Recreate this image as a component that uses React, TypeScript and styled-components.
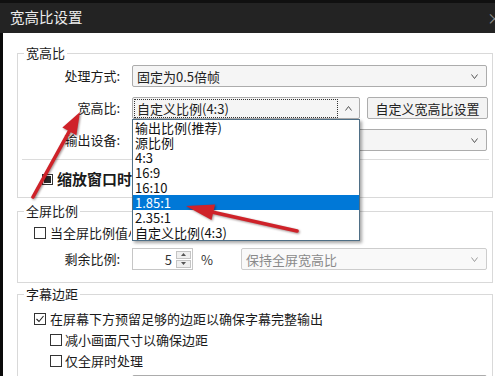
import React from 'react';
import styled, { createGlobalStyle } from 'styled-components';

const FONT = `"Noto Sans CJK SC", "Noto Sans", "Liberation Sans", sans-serif`;

const GlobalStyle = createGlobalStyle`
  html, body { margin: 0; padding: 0; background: #fff; }
  body { font-family: ${FONT}; }
  #root { width: 495px; height: 376px; overflow: hidden; }
`;

const Window = styled.div`
  position: relative;
  width: 495px;
  height: 376px;
  overflow: hidden;
  display: flex;
  flex-direction: column;
  background: #fff;
  font-family: ${FONT};
  font-size: 13px;
  color: #1a1a1a;
`;

const TitleBar = styled.div`
  flex: 0 0 33px;
  box-sizing: border-box;
  border-top: 3px solid #101010;
  background: #232323;
  display: flex;
  align-items: center;
  justify-content: space-between;
  padding: 0 0 2px 10px;
  color: #ececec;
  font-size: 14.5px;
  line-height: 1;
  overflow: hidden;
`;

const Close = styled.span`
  color: #8c8c8c;
  font-size: 15px;
  margin-right: -7px;
`;

const Body = styled.div`
  flex: 1 1 auto;
  border-left: 3px solid #0a0a0a;
  display: flex;
  flex-direction: column;
  padding-top: 12px;
`;

const Group = styled.fieldset<{ $mt?: number }>`
  margin: ${(p) => p.$mt ?? 0}px 2px 0 14px;
  padding: 0;
  border: 1px solid #d9d9d9;
  min-inline-size: 0;
`;

const Legend = styled.legend`
  margin-left: 6px;
  padding: 0 2px;
  font-size: 13px;
  line-height: 16px;
  color: #1a1a1a;
`;

const GroupBody = styled.div<{ $pt: number; $pb: number }>`
  display: flex;
  flex-direction: column;
  padding: ${(p) => p.$pt}px 0 ${(p) => p.$pb}px 0;
`;

const FormRow = styled.div<{ $mt?: number }>`
  display: flex;
  align-items: center;
  height: 22px;
  margin-top: ${(p) => p.$mt ?? 0}px;
`;

const Label = styled.span`
  flex: 0 0 102px;
  margin-right: 12px;
  text-align: right;
  white-space: nowrap;
  line-height: 16px;
`;

const Combo = styled.div<{ $disabled?: boolean }>`
  position: relative;
  box-sizing: border-box;
  flex: 1 1 auto;
  height: 22px;
  margin-right: 5px;
  border: 1px solid ${(p) => (p.$disabled ? '#cdcdcd' : '#acacac')};
  border-radius: 2px;
  background: ${(p) => (p.$disabled ? '#f9f9f9' : '#f5f5f5')};
  color: ${(p) => (p.$disabled ? '#8a8a8a' : '#222')};
  display: flex;
  align-items: center;
  justify-content: space-between;
  padding: 0 8px 0 4px;
  white-space: nowrap;
`;

const OpenCombo = styled.div`
  position: relative;
  box-sizing: border-box;
  flex: 0 0 228px;
  height: 22px;
  border: 1px solid #acacac;
  border-radius: 2px;
  background: #f5f5f5;
  display: flex;
  align-items: center;
  padding-left: 1px;
`;

const FocusRect = styled.div`
  box-sizing: border-box;
  flex: 0 0 204px;
  height: 19px;
  border: 1px dotted #333;
  display: flex;
  align-items: center;
  padding-left: 2px;
  color: #222;
  white-space: nowrap;
`;

const ArrowSlot = styled.div`
  flex: 1 1 auto;
  display: flex;
  align-items: center;
  justify-content: center;
`;

const DropList = styled.div`
  position: absolute;
  left: -1px;
  top: calc(100% + 1px);
  width: 228px;
  box-sizing: border-box;
  border: 1px solid #4f6f86;
  background: #fff;
  box-shadow: 2px 2px 3px rgba(0, 0, 0, 0.35);
  z-index: 10;
  display: flex;
  flex-direction: column;
`;

const DropItem = styled.div<{ $selected?: boolean }>`
  height: 15px;
  line-height: 15px;
  padding-left: 2px;
  font-size: 13px;
  white-space: nowrap;
  background: ${(p) => (p.$selected ? '#0078d7' : 'transparent')};
  color: ${(p) => (p.$selected ? '#fff' : '#111')};
`;

const Button = styled.div`
  box-sizing: border-box;
  flex: 0 0 121px;
  height: 22px;
  margin-left: 7px;
  border: 1px solid #adadad;
  border-radius: 2px;
  background: #f3f3f3;
  display: flex;
  align-items: center;
  justify-content: center;
  color: #222;
  white-space: nowrap;
`;

const Separator = styled.div`
  height: 1px;
  background: #dcdcdc;
  margin: 8px 3px 0 4px;
`;

const CheckRow = styled.div<{ $indent: number; $mt?: number; $h?: number }>`
  display: flex;
  align-items: center;
  height: ${(p) => p.$h ?? 20}px;
  margin-top: ${(p) => p.$mt ?? 0}px;
  padding-left: ${(p) => p.$indent}px;
  white-space: nowrap;
`;

const Box = styled.span<{ $size: number; $filled?: boolean }>`
  position: relative;
  box-sizing: border-box;
  flex: 0 0 ${(p) => p.$size}px;
  width: ${(p) => p.$size}px;
  height: ${(p) => p.$size}px;
  border: 1px solid #333;
  background: #fff;
  display: flex;
  align-items: center;
  justify-content: center;
  &::after {
    content: '';
    display: ${(p) => (p.$filled ? 'block' : 'none')};
    width: ${(p) => p.$size - 4}px;
    height: ${(p) => p.$size - 4}px;
    background: #2a2a2a;
  }
`;

const CheckText = styled.span<{ $gap: number; $bold?: boolean; $clip?: number }>`
  margin-left: ${(p) => p.$gap}px;
  font-size: ${(p) => (p.$bold ? 15 : 13)}px;
  font-weight: ${(p) => (p.$bold ? 700 : 400)};
  line-height: 18px;
  overflow: hidden;
  max-width: ${(p) => (p.$clip ? `${p.$clip}px` : 'none')};
`;

const Spin = styled.div`
  box-sizing: border-box;
  flex: 0 0 61px;
  height: 22px;
  border: 1px solid #c6c6c6;
  background: #fff;
  display: flex;
  align-items: center;
  justify-content: flex-end;
  padding-right: 1px;
`;

const SpinValue = styled.span`
  margin-right: 4px;
  color: #333;
`;

const SpinButtons = styled.div`
  display: flex;
  flex-direction: column;
  gap: 1px;
`;

const SpinBtn = styled.div`
  box-sizing: border-box;
  width: 15px;
  height: 8px;
  border: 1px solid #c4c4c4;
  background: #efefef;
  display: flex;
  align-items: center;
  justify-content: center;
`;

const Percent = styled.span`
  flex: 0 0 48px;
  padding-left: 8px;
  box-sizing: border-box;
  color: #333;
`;

const Overlay = styled.svg`
  position: absolute;
  left: 0;
  top: 0;
  z-index: 20;
  pointer-events: none;
  filter: drop-shadow(1px 1px 1px rgba(40, 0, 0, 0.45));
`;

const Chevron = ({ up = false, color = '#555' }: { up?: boolean; color?: string }) => (
  <svg width="7" height="5" viewBox="0 0 7 5">
    <polyline
      points={up ? '0.5,4.5 3.5,0.5 6.5,4.5' : '0.5,0.5 3.5,4.5 6.5,0.5'}
      fill="none"
      stroke={color}
      strokeWidth="1"
    />
  </svg>
);

const Tri = ({ up }: { up?: boolean }) => (
  <svg width="5" height="3" viewBox="0 0 5 3">
    <polygon points={up ? '0,3 2.5,0 5,3' : '0,0 2.5,3 5,0'} fill="#555" />
  </svg>
);

const Tick = () => (
  <svg width="10" height="10" viewBox="0 0 10 10">
    <polyline points="1.5,5 4,7.5 8.5,2" fill="none" stroke="#222" strokeWidth="1.1" />
  </svg>
);

const items = ['输出比例(推荐)', '源比例', '4:3', '16:9', '16:10', '1.85:1', '2.35:1', '自定义比例(4:3)'];

const RED = '#cf2229';

export default function App() {
  return (
    <>
      <GlobalStyle />
      <Window>
        <TitleBar>
          <span>宽高比设置</span>
          <Close>×</Close>
        </TitleBar>
        <Body>
          <Group>
            <Legend>宽高比</Legend>
            <GroupBody $pt={4} $pb={8}>
              <FormRow>
                <Label>处理方式:</Label>
                <Combo>
                  <span>固定为0.5倍帧</span>
                  <Chevron />
                </Combo>
              </FormRow>
              <FormRow $mt={10}>
                <Label>宽高比:</Label>
                <OpenCombo>
                  <FocusRect>自定义比例(4:3)</FocusRect>
                  <ArrowSlot>
                    <Chevron up />
                  </ArrowSlot>
                  <DropList>
                    {items.map((it, i) => (
                      <DropItem key={it} $selected={i === 5}>
                        {it}
                      </DropItem>
                    ))}
                  </DropList>
                </OpenCombo>
                <Button>自定义宽高比设置</Button>
              </FormRow>
              <FormRow $mt={10}>
                <Label>输出设备:</Label>
                <Combo>
                  <span></span>
                  <Chevron />
                </Combo>
              </FormRow>
              <Separator />
              <CheckRow $indent={24} $mt={9}>
                <Box $size={11} $filled />
                <CheckText $gap={4} $bold $clip={75}>
                  缩放窗口时保持宽高比
                </CheckText>
              </CheckRow>
            </GroupBody>
          </Group>

          <Group $mt={5}>
            <Legend>全屏比例</Legend>
            <GroupBody $pt={4} $pb={12}>
              <CheckRow $indent={16}>
                <Box $size={12} />
                <CheckText $gap={4} $clip={81}>
                  当全屏比例值小于以下数值时保持
                </CheckText>
              </CheckRow>
              <FormRow $mt={5}>
                <Label>剩余比例:</Label>
                <Spin>
                  <SpinValue>5</SpinValue>
                  <SpinButtons>
                    <SpinBtn>
                      <Tri up />
                    </SpinBtn>
                    <SpinBtn>
                      <Tri />
                    </SpinBtn>
                  </SpinButtons>
                </Spin>
                <Percent>%</Percent>
                <Combo $disabled>
                  <span>保持全屏宽高比</span>
                  <Chevron color="#9a9a9a" />
                </Combo>
              </FormRow>
            </GroupBody>
          </Group>

          <Group $mt={3}>
            <Legend>字幕边距</Legend>
            <GroupBody $pt={6} $pb={8}>
              <CheckRow $indent={16} $h={21}>
                <Box $size={12}>
                  <Tick />
                </Box>
                <CheckText $gap={4}>在屏幕下方预留足够的边距以确保字幕完整输出</CheckText>
              </CheckRow>
              <CheckRow $indent={32} $h={21}>
                <Box $size={12} />
                <CheckText $gap={3}>减小画面尺寸以确保边距</CheckText>
              </CheckRow>
              <CheckRow $indent={32} $h={21}>
                <Box $size={12} />
                <CheckText $gap={3}>仅全屏时处理</CheckText>
              </CheckRow>
              <FormRow $mt={4}>
                <Label></Label>
                <Combo>
                  <span></span>
                  <Chevron />
                </Combo>
              </FormRow>
            </GroupBody>
          </Group>
        </Body>

        <Overlay width="495" height="376" viewBox="0 0 495 376">
          <line x1="33" y1="197" x2="70" y2="130" stroke={RED} strokeWidth="3.6" strokeLinecap="round" />
          <polygon points="80,112 76.4,135.2 62.4,127.4" fill={RED} />
          <line x1="297" y1="231" x2="212" y2="212" stroke={RED} strokeWidth="3.6" strokeLinecap="round" />
          <polygon points="186,206 215.1,204.4 211.5,220" fill={RED} />
        </Overlay>
      </Window>
    </>
  );
}
